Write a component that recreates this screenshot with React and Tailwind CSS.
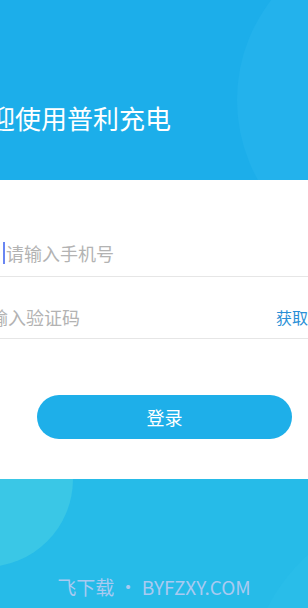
export default function App() {
  return (
    <div className="w-[308px] h-[608px] overflow-hidden flex flex-col bg-white font-['Noto_Sans_CJK_SC','Noto_Sans',sans-serif]">
      {/* 顶部 */}
      <div className="relative h-[180px] shrink-0 overflow-hidden bg-[#1caeea]">
        <div className="absolute left-[237px] top-[-63px] w-[326px] h-[326px] rounded-full bg-[#23b2ec]" />
        <h1 className="relative pt-[100px] ml-[-37px] whitespace-nowrap text-[26px] leading-[36px] font-normal text-white">
          欢迎使用普利充电
        </h1>
      </div>

      {/* 表单 */}
      <div className="h-[299px] shrink-0 bg-white">
        <div className="mt-[35px] h-[62px] pt-[15px] flex items-center border-b border-[#e6e6e6]">
          <span className="ml-[3px] w-[2px] h-[22px] bg-[#6a86f2]" />
          <input
            type="tel"
            placeholder="请输入手机号"
            className="ml-[1px] flex-1 min-w-0 bg-transparent outline-none text-[18px] text-[#333] placeholder:text-[#b3b3b3]"
          />
        </div>
        <div className="h-[62px] pt-[19px] flex items-center justify-between border-b border-[#e6e6e6]">
          <input
            type="text"
            placeholder="输入验证码"
            className="ml-[-10px] w-[200px] bg-transparent outline-none text-[18px] text-[#333] placeholder:text-[#b3b3b3]"
          />
          <button className="ml-auto w-[32px] overflow-hidden whitespace-nowrap text-left text-[16px] text-[#2a8fd6]">
            获取验证码
          </button>
        </div>
        <button className="mt-[56px] ml-[37px] w-[255px] h-[44px] rounded-full bg-[#1eafe9] text-[18px] text-white">
          登录
        </button>
      </div>

      {/* 底部 */}
      <div className="relative flex-1 overflow-hidden bg-[#26bbe8]">
        <div className="absolute left-[-103px] top-[-88px] w-[176px] h-[176px] rounded-full bg-[#3ac7e6]" />
        <div className="absolute left-[248px] top-[30px] w-[360px] h-[360px] rounded-full bg-[#29bde9]" />
        <p className="relative pt-[97px] text-center text-[19px] leading-[22px] text-[#a9caf1] whitespace-nowrap">
          飞下载 • BYFZXY.COM
        </p>
      </div>
    </div>
  );
}
